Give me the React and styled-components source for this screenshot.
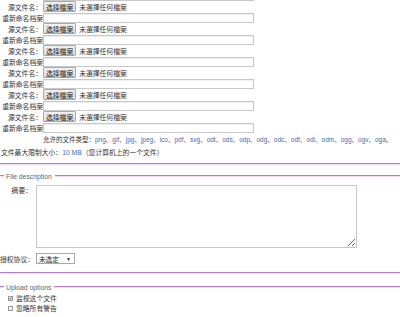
import React from "react";
import styled, { createGlobalStyle } from "styled-components";

const GlobalStyle = createGlobalStyle`
  html, body {
    margin: 0;
    padding: 0;
    background: #fff;
    overflow: hidden;
  }
  body {
    font-family: "Liberation Sans", "Noto Sans CJK SC", sans-serif;
    font-size: 6.8px;
    color: #333;
  }
`;

const Page = styled.div`
  width: 400px;
  margin-top: -10px;
`;

const SourceTable = styled.div`
  display: grid;
  grid-template-columns: 43px 1fr;
  grid-auto-rows: 11px;
  align-items: center;
`;

const Label = styled.div`
  text-align: right;
  white-space: nowrap;
  padding-right: ${(p) => (p.$pad ? "1px" : "0")};
`;

const Cell = styled.div`
  display: flex;
  align-items: center;
  gap: 3px;
  white-space: nowrap;
`;

const FileButton = styled.span`
  display: inline-flex;
  align-items: center;
  height: 9px;
  padding: 0 2px;
  border: 1px solid #a9a9a9;
  border-radius: 1px;
  background: linear-gradient(#f2f2f2, #dcdcdc);
  color: #222;
`;

const TextInput = styled.div`
  box-sizing: border-box;
  width: 211px;
  height: 10px;
  border: 1px solid #c8c8c8;
  box-shadow: inset 0 1px 1px #eee;
  background: #fff;
`;

const TypesRow = styled.div`
  padding: 2px 0 0 43px;
  height: 10px;
  line-height: 10px;
  font-size: 6.5px;
  white-space: nowrap;
`;

const Blue = styled.span`
  color: #4a6bb0;
`;

const SizeRow = styled.div`
  padding: 3px 0 0 1px;
  height: 10px;
  line-height: 10px;
  white-space: nowrap;
`;

const Divider = styled.div`
  height: 1px;
  background: #b77fc2;
  border-bottom: 1px solid #f0dcf2;
  margin-top: ${(p) => p.$top}px;
`;

const Legend = styled.div`
  display: flex;
  align-items: center;
  gap: 2px;
  margin-top: ${(p) => p.$top}px;
  height: 12px;
  color: #666;
  &::before,
  &::after {
    content: "";
    height: 2px;
    background: linear-gradient(#b77fc2 50%, #f0dcf2 50%);
  }
  &::before {
    width: 4px;
  }
  &::after {
    flex: 1;
    margin-left: 1px;
  }
`;

const FieldRow = styled.div`
  display: grid;
  grid-template-columns: ${(p) => p.$label}px auto;
  column-gap: 4px;
  align-items: ${(p) => (p.$top ? "start" : "center")};
  margin-top: ${(p) => p.$mt}px;
`;

const Summary = styled.textarea`
  box-sizing: border-box;
  width: 321px;
  height: 63px;
  margin: 0;
  border: 1px solid #c8c8c8;
  font: inherit;
  resize: both;
  outline: none;
`;

const SelectBox = styled.div`
  box-sizing: border-box;
  display: flex;
  align-items: center;
  justify-content: space-between;
  width: 39px;
  height: 11px;
  padding: 0 3px 0 2px;
  border: 1px solid #aaa;
  background: #fff;
  color: #222;
  font-size: 6.6px;
`;

const Arrow = styled.span`
  font-size: 5px;
`;

const CheckList = styled.div`
  display: flex;
  flex-direction: column;
  padding: 0 0 0 8px;
`;

const CheckRow = styled.div`
  display: flex;
  align-items: center;
  gap: 3px;
  height: 10px;
`;

const Box = styled.span`
  box-sizing: border-box;
  width: 5px;
  height: 5px;
  border: 1px solid #999;
  background: #f4f4f4;
  display: inline-flex;
`;

const rows = [0, 1, 2, 3, 4, 5];

const types = "png、gif、jpg、jpeg、ico、pdf、svg、odt、ods、odp、odg、odc、odf、odi、odm、ogg、ogv、oga";

export default function App() {
  return (
    <Page>
      <GlobalStyle />
      <SourceTable>
        <Label />
        <Cell>
          <TextInput />
        </Cell>
        {rows.map((r) => (
          <React.Fragment key={`row-${r}`}>
            <Label $pad>源文件名：</Label>
            <Cell>
              <FileButton>选择檔案</FileButton>
              <span>未選擇任何檔案</span>
            </Cell>
            <Label>重新命名档案</Label>
            <Cell>
              <TextInput />
            </Cell>
          </React.Fragment>
        ))}
      </SourceTable>
      <TypesRow>
        允许的文件类型：<Blue>{types}</Blue>。
      </TypesRow>
      <SizeRow>
        文件最大限制大小：<Blue>10 MB</Blue>（您计算机上的一个文件）
      </SizeRow>
      <Divider $top={5} />
      <Legend $top={5}>File description</Legend>
      <FieldRow $label={32} $top $mt={3}>
        <Label>摘要：</Label>
        <Summary />
      </FieldRow>
      <FieldRow $label={32} $mt={5}>
        <Label>授权协议：</Label>
        <SelectBox>
          <span>未选定</span>
          <Arrow>▼</Arrow>
        </SelectBox>
      </FieldRow>
      <Divider $top={8} />
      <Legend $top={7}>Upload options</Legend>
      <CheckList>
        <CheckRow>
          <Box>
            <svg width="3" height="3" viewBox="0 0 3 3">
              <path d="M0.3 1.5 L1.2 2.4 L2.7 0.5" stroke="#333" strokeWidth="0.8" fill="none" />
            </svg>
          </Box>
          <span>监视这个文件</span>
        </CheckRow>
        <CheckRow>
          <Box />
          <span>忽略所有警告</span>
        </CheckRow>
      </CheckList>
    </Page>
  );
}
